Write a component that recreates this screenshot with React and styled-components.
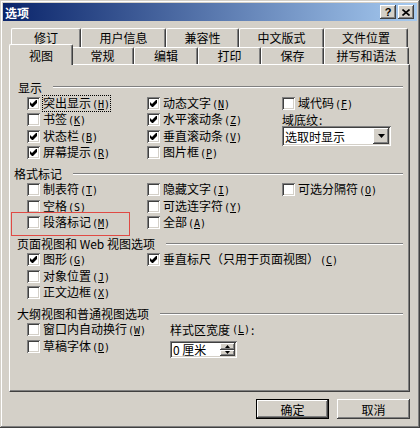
import React from 'react';
import styled, { createGlobalStyle } from 'styled-components';

const GlobalStyle = createGlobalStyle`
  html, body { margin: 0; padding: 0; background: #d4d0c8; }
  body {
    font-family: "Noto Sans CJK SC", "DejaVu Sans", sans-serif;
    font-size: 12px;
    color: #000;
  }
  * { box-sizing: border-box; }
`;

const raised = 'inset -1px -1px #404040, inset 1px 1px #fff, inset -2px -2px #808080, inset 2px 2px #d4d0c8';
const sunken = 'inset 1px 1px #808080, inset -1px -1px #fff, inset 2px 2px #404040, inset -2px -2px #d4d0c8';

const Dialog = styled.div`
  width: 420px;
  height: 428px;
  padding: 3px;
  background: #d4d0c8;
  box-shadow: inset -1px -1px #404040, inset 1px 1px #d4d0c8, inset -2px -2px #808080, inset 2px 2px #fff;
  display: flex;
  flex-direction: column;
`;

const TitleBar = styled.div`
  height: 18px;
  display: flex;
  align-items: center;
  justify-content: space-between;
  padding: 0 3px 0 2px;
  background: linear-gradient(to right, #0a246a, #a6caf0);
  color: #fff;
  font-weight: bold;
  font-size: 12px;
`;

const TitleButtons = styled.div`
  display: flex;
  gap: 2px;
`;

const TitleButton = styled.div`
  width: 16px;
  height: 14px;
  background: #d4d0c8;
  box-shadow: ${raised};
  display: flex;
  align-items: center;
  justify-content: center;
  color: #000;
  font: bold 11px "Liberation Sans", sans-serif;
  line-height: 14px;
`;

const TabStrip = styled.div`
  margin-top: 7px;
  padding-left: 8px;
  position: relative;
  z-index: 1;
`;

const TabRow = styled.div`
  display: flex;
  align-items: flex-end;
  height: ${p => p.$h}px;
`;

const Tab = styled.div`
  flex: none;
  position: relative;
  width: ${p => (p.$active ? p.$w + 4 : p.$w)}px;
  height: ${p => (p.$active ? 21 : p.$h)}px;
  margin: ${p => (p.$active ? '0 -2px -1px' : '0')};
  z-index: ${p => (p.$active ? 2 : 1)};
  padding-top: ${p => (p.$active ? 3 : 0)}px;
  line-height: ${p => p.$h - 1}px;
  text-align: center;
  background: #d4d0c8;
  border-top: 1px solid #fff;
  border-left: 1px solid #fff;
  border-right: 1px solid #404040;
  border-radius: 2px 2px 0 0;
  box-shadow: inset -1px 0 #808080;
`;

const Panel = styled.div`
  margin-left: 6px;
  width: 401px;
  height: 328px;
  border-top: 1px solid #fff;
  border-left: 1px solid #fff;
  border-right: 1px solid #404040;
  border-bottom: 1px solid #404040;
  box-shadow: inset -1px -1px #808080;
  padding: 14px 6px 0 7px;
`;

const Section = styled.div`
  margin-bottom: 4.5px;
`;

const Header = styled.div`
  display: flex;
  align-items: center;
  height: 16px;
  margin-left: ${p => p.$shift || 0}px;
  white-space: nowrap;
`;

const HeaderLine = styled.div`
  flex: 1;
  margin-left: 11px;
  height: 2px;
  border-top: 1px solid #808080;
  border-bottom: 1px solid #fff;
`;

const Columns = styled.div`
  display: flex;
  padding-left: 10px;
`;

const Column = styled.div`
  width: ${p => (p.$w ? `${p.$w}px` : 'auto')};
  flex: ${p => (p.$w ? 'none' : '1')};
  display: flex;
  flex-direction: column;
`;

const Row = styled.div`
  height: 16.5px;
  display: flex;
  align-items: center;
  gap: 1px;
  position: relative;
  white-space: nowrap;

  ${p => p.$marked && `
    &::after {
      content: '';
      position: absolute;
      left: -16px;
      top: -2.5px;
      width: 117px;
      height: 22px;
      border: 1px solid #e04a44;
      pointer-events: none;
    }
  `}
`;

const Box = styled.span`
  display: block;
  flex: none;
  width: 13px;
  height: 13px;
  margin-right: 1px;
  background: #fff;
  box-shadow: ${sunken};
`;

const Label = styled.span`
  line-height: 13px;
  border: 1px dotted ${p => (p.$focus ? '#000' : 'transparent')};
`;

const Key = styled.span`
  margin-left: 1px;
  font-family: "DejaVu Sans Mono", monospace;
  font-size: 10px;
`;

const Select = styled.div`
  width: 109px;
  height: 20px;
  flex: none;
  padding: 2px;
  display: flex;
  align-items: center;
  justify-content: space-between;
  background: #fff;
  box-shadow: ${sunken};
`;

const SelectText = styled.span`
  padding-left: 1px;
`;

const ArrowButton = styled.span`
  width: 16px;
  height: 16px;
  background: #d4d0c8;
  box-shadow: ${raised};
  display: flex;
  align-items: center;
  justify-content: center;
`;

const Spinner = styled.div`
  margin-top: 3px;
  width: 67px;
  height: 17px;
  padding: 2px;
  display: flex;
  background: #fff;
  box-shadow: ${sunken};
`;

const SpinValue = styled.span`
  flex: 1;
  padding-left: 1px;
  line-height: 13px;
  white-space: pre;
`;

const SpinButtons = styled.div`
  width: 15px;
  display: flex;
  flex-direction: column;
`;

const SpinButton = styled.span`
  flex: 1;
  background: #d4d0c8;
  box-shadow: ${raised};
  display: flex;
  align-items: center;
  justify-content: center;
`;

const Footer = styled.div`
  display: flex;
  justify-content: flex-end;
  gap: 8px;
  margin-top: 7px;
  padding-right: 7px;
`;

const Button = styled.button`
  width: 73px;
  height: 20px;
  padding: 0;
  border: none;
  font-family: "Noto Sans CJK SC", sans-serif;
  font-size: 12px;
  color: #000;
  background: #d4d0c8;
  box-shadow: ${p => (p.$default
    ? 'inset 0 0 0 1px #000, inset -2px -2px #404040, inset 2px 2px #fff, inset -3px -3px #808080'
    : raised)};
`;

const Check = () => (
  <svg width="13" height="13" viewBox="0 0 13 13" style={{ display: 'block' }}>
    <polygon points="3,5 5,7 9,3 10,3 10,6 6,10 5,10 3,8" fill="#000" />
  </svg>
);

const Mn = ({ text, k }) => (
  <>
    {text}<Key>(<u>{k}</u>)</Key>
  </>
);

const CheckRow = ({ text, k, checked, focus, marked }) => (
  <Row $marked={marked}>
    <Box>{checked && <Check />}</Box>
    <Label $focus={focus}><Mn text={text} k={k} /></Label>
  </Row>
);

const row1 = [['修订', 70], ['用户信息', 85], ['兼容性', 73], ['中文版式', 85], ['文件位置', 84]];
const row2 = [['视图', 60], ['常规', 63], ['编辑', 64], ['打印', 63], ['保存', 63], ['拼写和语法', 85]];

export default function App() {
  return (
    <>
      <GlobalStyle />
      <Dialog>
        <TitleBar>
          <span>选项</span>
          <TitleButtons>
            <TitleButton>?</TitleButton>
            <TitleButton>
              <svg width="8" height="7" viewBox="0 0 8 7">
                <path d="M0.5 0.5L7.5 6.5M7.5 0.5L0.5 6.5" stroke="#000" strokeWidth="1.6" />
              </svg>
            </TitleButton>
          </TitleButtons>
        </TitleBar>

        <TabStrip>
          <TabRow $h={19}>
            {row1.map(([t, w]) => <Tab key={t} $w={w} $h={19}>{t}</Tab>)}
          </TabRow>
          <TabRow $h={17}>
            {row2.map(([t, w], i) => <Tab key={t} $w={w} $h={17} $active={i === 0}>{t}</Tab>)}
          </TabRow>
        </TabStrip>

        <Panel>
          <Section>
            <Header $shift={1}>显示<HeaderLine /></Header>
            <Columns>
              <Column $w={120}>
                <CheckRow text="突出显示" k="H" checked focus />
                <CheckRow text="书签" k="K" />
                <CheckRow text="状态栏" k="B" checked />
                <CheckRow text="屏幕提示" k="R" checked />
              </Column>
              <Column $w={135}>
                <CheckRow text="动态文字" k="N" checked />
                <CheckRow text="水平滚动条" k="Z" checked />
                <CheckRow text="垂直滚动条" k="V" checked />
                <CheckRow text="图片框" k="P" />
              </Column>
              <Column>
                <CheckRow text="域代码" k="F" />
                <Row>域底纹<u>:</u></Row>
                <Row>
                  <Select>
                    <SelectText>选取时显示</SelectText>
                    <ArrowButton>
                      <svg width="7" height="4" viewBox="0 0 7 4"><path d="M0 0h7L3.5 4z" fill="#000" /></svg>
                    </ArrowButton>
                  </Select>
                </Row>
              </Column>
            </Columns>
          </Section>

          <Section>
            <Header $shift={-3}>格式标记<HeaderLine /></Header>
            <Columns>
              <Column $w={120}>
                <CheckRow text="制表符" k="T" />
                <CheckRow text="空格" k="S" />
                <CheckRow text="段落标记" k="M" marked />
              </Column>
              <Column $w={135}>
                <CheckRow text="隐藏文字" k="I" />
                <CheckRow text="可选连字符" k="Y" />
                <CheckRow text="全部" k="A" />
              </Column>
              <Column>
                <CheckRow text="可选分隔符" k="O" />
              </Column>
            </Columns>
          </Section>

          <Section>
            <Header>页面视图和 Web 视图选项<HeaderLine /></Header>
            <Columns>
              <Column $w={120}>
                <CheckRow text="图形" k="G" checked />
                <CheckRow text="对象位置" k="J" />
                <CheckRow text="正文边框" k="X" />
              </Column>
              <Column>
                <CheckRow text="垂直标尺（只用于页面视图）" k="C" checked />
              </Column>
            </Columns>
          </Section>

          <Section>
            <Header>大纲视图和普通视图选项<HeaderLine /></Header>
            <Columns>
              <Column $w={143}>
                <CheckRow text="窗口内自动换行" k="W" />
                <CheckRow text="草稿字体" k="D" />
              </Column>
              <Column>
                <Row><Mn text="样式区宽度" k="L" />:</Row>
                <Spinner>
                  <SpinValue>0 厘米</SpinValue>
                  <SpinButtons>
                    <SpinButton>
                      <svg width="5" height="3" viewBox="0 0 5 3"><path d="M2.5 0L5 3H0z" fill="#000" /></svg>
                    </SpinButton>
                    <SpinButton>
                      <svg width="5" height="3" viewBox="0 0 5 3"><path d="M0 0h5L2.5 3z" fill="#000" /></svg>
                    </SpinButton>
                  </SpinButtons>
                </Spinner>
              </Column>
            </Columns>
          </Section>
        </Panel>

        <Footer>
          <Button $default>确定</Button>
          <Button>取消</Button>
        </Footer>
      </Dialog>
    </>
  );
}
